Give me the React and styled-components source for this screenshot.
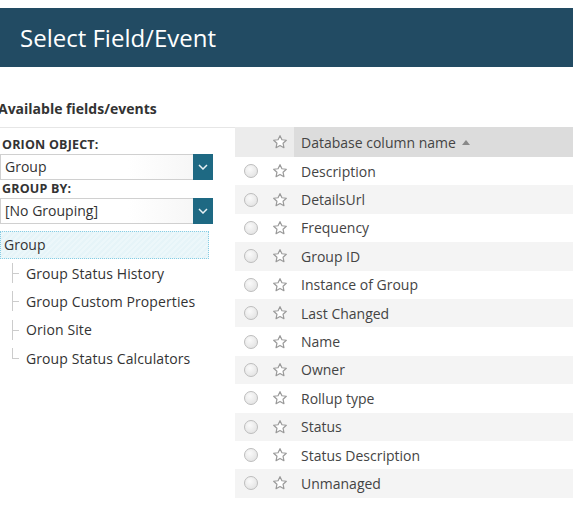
import styled, { createGlobalStyle } from "styled-components";

const GlobalStyle = createGlobalStyle`
  body {
    margin: 0;
    padding-top: 8px;
    font-family: "Open Sans", "Noto Sans", sans-serif;
    color: #333;
    background: #fff;
    overflow: hidden;
  }
`;

const Header = styled.div`
  height: 59px;
  background: #224b63;
  display: flex;
  align-items: center;
  padding-left: 20px;
`;

const Title = styled.h1`
  margin: 0;
  font-size: 24px;
  font-weight: 400;
  color: #fff;
`;

const SectionTitle = styled.div`
  margin: 32px 0 0 -2px;
  height: 20px;
  line-height: 20px;
  font-size: 14px;
  font-weight: 700;
  color: #333;
`;

const Body = styled.div`
  display: flex;
  margin-top: 8px;
`;

const Panel = styled.div`
  width: 235px;
  flex: none;
  border-top: 1px solid #e6e6e6;
  padding-top: 8px;
`;

const Label = styled.div`
  margin-left: 2px;
  font-size: 12.5px;
  font-weight: 700;
  text-transform: uppercase;
  line-height: 17px;
  letter-spacing: 0.2px;
  color: #333;
`;

const Select = styled.div`
  width: 213px;
  height: 26px;
  display: flex;
  box-sizing: border-box;
  border: 1px solid #d0d0d0;
  border-right: none;
  background: linear-gradient(to right, #fff 60%, #f4f4f4);
  margin-top: 1px;
`;

const SelectText = styled.div`
  flex: 1;
  font-size: 14px;
  line-height: 24px;
  padding-left: 4px;
  color: #333;
`;

const SelectButton = styled.div`
  width: 20px;
  margin-top: -1px;
  height: 26px;
  background: #1e6983;
  display: flex;
  align-items: center;
  justify-content: center;
`;

const TreeRoot = styled.div`
  width: 209px;
  height: 28px;
  box-sizing: border-box;
  margin-top: 7px;
  border: 1px dotted #86cde4;
  background: repeating-linear-gradient(
    135deg,
    #e6f4f8 0,
    #e6f4f8 2px,
    #ecf7fa 2px,
    #ecf7fa 4px
  );
  font-size: 14px;
  line-height: 26px;
  padding-left: 3px;
  color: #333;
`;

const TreeList = styled.div`
  display: flex;
  flex-direction: column;
`;

const TreeItem = styled.div`
  position: relative;
  height: 28.4px;
  display: flex;
  align-items: center;
  padding-left: 26px;
  font-size: 14px;
  letter-spacing: 0.1px;
  color: #333;

  &::before {
    content: "";
    position: absolute;
    left: 12px;
    top: 4px;
    height: ${(p) => (p.last ? "10px" : "20px")};
    border-left: 1px solid #cccccc;
  }

  &::after {
    content: "";
    position: absolute;
    left: 12px;
    top: 14px;
    width: 7px;
    border-top: 1px solid #cccccc;
  }
`;

const Table = styled.div`
  flex: 1;
  display: flex;
  flex-direction: column;
`;

const Row = styled.div`
  display: grid;
  grid-template-columns: 30px 29px 1fr;
  align-items: center;
  height: ${(p) => (p.head ? "30px" : "28.4px")};
  background: ${(p) => (p.head ? "#ececec" : p.alt ? "#f4f4f4" : "#fff")};
`;

const Cell = styled.div`
  display: flex;
  align-items: center;
  justify-content: ${(p) => (p.center ? "center" : "flex-start")};
  height: 100%;
`;

const NameHead = styled.div`
  height: 100%;
  display: flex;
  align-items: center;
  gap: 6px;
  padding-left: 7px;
  background: #dcdcdc;
  font-size: 14px;
  color: #444;
`;

const Name = styled.div`
  padding-left: 7px;
  font-size: 14px;
  color: #444;
`;

const Radio = styled.span`
  width: 12px;
  height: 12px;
  border-radius: 50%;
  border: 1px solid #bdbdbd;
  background: radial-gradient(circle at 40% 35%, #fafafa, #dedede);
  margin-left: 2px;
`;

const Chevron = () => (
  <svg width="10" height="6" viewBox="0 0 10 6">
    <path d="M1 1 L5 5 L9 1" fill="none" stroke="#e8f1f4" strokeWidth="1.5" />
  </svg>
);

const Star = () => (
  <svg width="16" height="16" viewBox="0 0 24 24">
    <path
      d="M12 2.5 L14.9 8.6 L21.5 9.4 L16.6 13.9 L17.9 20.5 L12 17.2 L6.1 20.5 L7.4 13.9 L2.5 9.4 L9.1 8.6 Z"
      fill="#fff"
      stroke="#9a9a9a"
      strokeWidth="1.8"
      strokeLinejoin="round"
    />
  </svg>
);

const fields = [
  "Description",
  "DetailsUrl",
  "Frequency",
  "Group ID",
  "Instance of Group",
  "Last Changed",
  "Name",
  "Owner",
  "Rollup type",
  "Status",
  "Status Description",
  "Unmanaged",
];

const children = [
  "Group Status History",
  "Group Custom Properties",
  "Orion Site",
  "Group Status Calculators",
];

export default function App() {
  return (
    <>
      <GlobalStyle />
      <Header>
        <Title>Select Field/Event</Title>
      </Header>
      <SectionTitle>Available fields/events</SectionTitle>
      <Body>
        <Panel>
          <Label>Orion Object:</Label>
          <Select>
            <SelectText>Group</SelectText>
            <SelectButton>
              <Chevron />
            </SelectButton>
          </Select>
          <Label>Group By:</Label>
          <Select>
            <SelectText>[No Grouping]</SelectText>
            <SelectButton>
              <Chevron />
            </SelectButton>
          </Select>
          <TreeRoot>Group</TreeRoot>
          <TreeList>
            {children.map((c, i) => (
              <TreeItem key={c} last={i === children.length - 1}>
                {c}
              </TreeItem>
            ))}
          </TreeList>
        </Panel>
        <Table>
          <Row head>
            <Cell />
            <Cell center>
              <Star />
            </Cell>
            <NameHead>
              Database column name
              <svg width="8" height="5" viewBox="0 0 8 5">
                <path d="M0 5 L4 0 L8 5 Z" fill="#888" />
              </svg>
            </NameHead>
          </Row>
          {fields.map((f, i) => (
            <Row key={f} alt={i % 2 === 1}>
              <Cell center>
                <Radio />
              </Cell>
              <Cell center>
                <Star />
              </Cell>
              <Name>{f}</Name>
            </Row>
          ))}
        </Table>
      </Body>
    </>
  );
}
